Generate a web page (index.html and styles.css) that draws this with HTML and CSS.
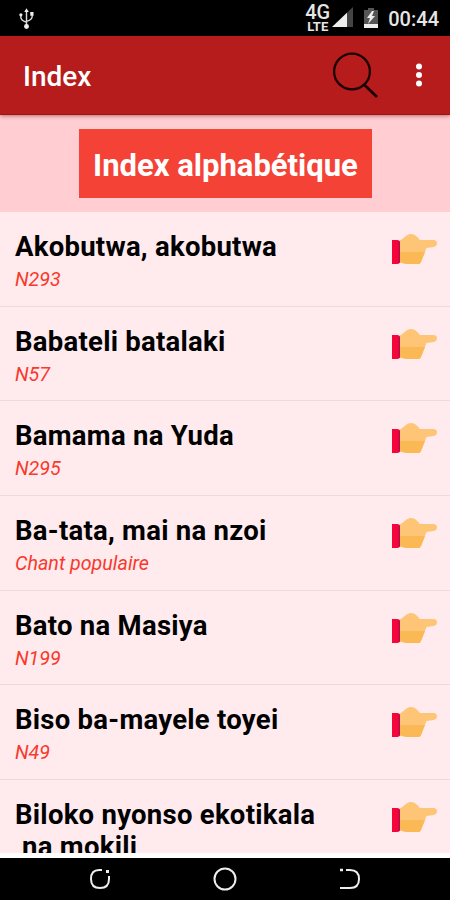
FILE: index.html
```html
<!DOCTYPE html>
<html lang="fr">
<head>
<meta charset="utf-8">
<title>Index</title>
<link rel="stylesheet" href="styles.css">
</head>
<body>
<svg class="defs" aria-hidden="true">
  <symbol id="hand" viewBox="0 0 46 32">
    <path fill="#ffc576" d="M8 8C12 6.500 15 1 20 1c4 0 6.500 3 9 6h13.500q3.500 .3 3.500 3.300t-3.500 3.700l-7 1L29.800 29.500q-.8 1.500-3 1.500H16q-4-.5-8-2z"/>
    <path fill="#fbb955" d="M8 19h26L29.800 29.500q-.8 1.500-3 1.500H16q-4-.5-8-2z"/>
    <path fill="#f4053a" d="M1 7h5q3 0 3 3v18q0 3-3 3H1z"/>
    <path fill="#b80c4c" d="M7.500 7.500q1.500 .7 1.500 2.500v18q0 2-1.500 2.500z"/>
  </symbol>
</svg>
<div class="phone">
  <div class="status">
    <svg class="usb" viewBox="0 0 16 23" fill="none" stroke="#ddd" stroke-width="1.500"><path d="M8 3v16M2 7v3q0 3 6 5M14 6v3q0 3-6 5"/><g fill="#eee" stroke="none"><path d="M8 0l2.500 4h-5z"/><circle cx="2" cy="7" r="1.700"/><path d="M12 4h3.500v4H12z"/><circle cx="8" cy="19.500" r="2.600"/></g></svg>
    <div class="network"><span class="gen">4G</span><span class="lte">LTE</span></div>
    <svg class="signal" viewBox="0 0 21 20"><path fill="#444" d="M21 0v20H0z"/><path fill="#eee" d="M15 5.700V20H0z"/></svg>
    <svg class="battery" viewBox="0 0 14 20"><path fill="#555" d="M4 0h6v2h4v14H0V2h4z"/><path fill="#eee" d="M0 16h14v4H0zM8 3L3 10h3l-2 6 7-8H8l2-5z"/></svg>
    <span class="clock">00:44</span>
  </div>
  <header class="bar">
    <h1>Index</h1>
    <svg class="search" viewBox="0 0 48 48" fill="none" stroke="#1c0000" stroke-width="2.300"><circle cx="20" cy="20.500" r="17.900"/><path d="M32 33.500l13 12.500" stroke-width="2.800"/></svg>
    <svg class="more" viewBox="0 0 6 24" fill="#fff"><circle cx="3" cy="3.500" r="3"/><circle cx="3" cy="12" r="3"/><circle cx="3" cy="20.500" r="3"/></svg>
  </header>
  <section class="heading"><div class="pill">Index alphabétique</div></section>
  <main class="list">
    <div class="row"><div class="txt"><b>Akobutwa, akobutwa</b><i>N293</i></div><svg class="hand"><use href="#hand"/></svg></div>
    <div class="row"><div class="txt"><b>Babateli batalaki</b><i>N57</i></div><svg class="hand"><use href="#hand"/></svg></div>
    <div class="row"><div class="txt"><b>Bamama na Yuda</b><i>N295</i></div><svg class="hand"><use href="#hand"/></svg></div>
    <div class="row"><div class="txt"><b>Ba-tata, mai na nzoi</b><i>Chant populaire</i></div><svg class="hand"><use href="#hand"/></svg></div>
    <div class="row"><div class="txt"><b>Bato na Masiya</b><i>N199</i></div><svg class="hand"><use href="#hand"/></svg></div>
    <div class="row"><div class="txt"><b>Biso ba-mayele toyei</b><i>N49</i></div><svg class="hand"><use href="#hand"/></svg></div>
    <div class="row"><div class="txt"><b>Biloko nyonso ekotikala<br>&nbsp;na mokili</b></div><svg class="hand"><use href="#hand"/></svg></div>
  </main>
  <nav class="nav">
    <svg viewBox="0 0 24 24" fill="none" stroke="#eee" stroke-width="2"><path d="M14 3h-3q-8 0-8 9t9 9 9-9V9"/><path d="M18 4.500h3" stroke-width="3"/></svg>
    <svg viewBox="0 0 24 24" fill="none" stroke="#eee" stroke-width="2"><circle cx="12" cy="12" r="10.500"/></svg>
    <svg viewBox="0 0 24 24" fill="none" stroke="#eee" stroke-width="2"><path d="M8 3h4q9 0 9 9t-9 9H2"/><path d="M2 3h3" stroke-width="2.500"/></svg>
  </nav>
</div>
</body>
</html>
```
FILE: styles.css
```css
* { box-sizing: border-box; }
body { margin: 0; font-family: Roboto, sans-serif; background: #fff; }
svg { display: block; flex: none; }
.defs { display: none; }
.phone { width: 450px; height: 900px; display: flex; flex-direction: column; overflow: hidden; }
.status { flex: none; height: 36px; background: #000; color: #e6e6e6; display: flex; align-items: flex-start; padding: 7px 11px 0 19px; }
.usb { width: 15px; height: 22px; margin-top: 1px; }
.network { margin-left: auto; width: 27px; display: flex; flex-direction: column; align-items: center; margin-top: -3px; }
.gen { font-size: 20px; line-height: 17px; font-weight: 500; }
.lte { font-size: 13px; line-height: 11px; font-weight: 700; }
.signal { width: 21px; height: 20px; margin-left: 1px; }
.battery { width: 14px; height: 20px; margin: 1px 10px 0 11px; }
.clock { font-size: 20px; line-height: 24px; font-weight: 500; }
.bar { flex: none; height: 79px; background: #b71c1c; color: #fff; display: flex; align-items: center; padding: 0 28px 0 23px; border-bottom: 1px solid #a90f0f; position: relative; box-shadow: 0 1px 4px rgba(80, 0, 0, .45); }
h1 { margin: 3px auto 0 0; font-size: 28px; font-weight: 500; }
.search { width: 48px; height: 48px; margin-right: 1px; }
.more { width: 6px; height: 24px; margin-left: 35px; }
.heading { flex: none; height: 97px; background: #ffcdd2; padding: 14px 0 0 79px; }
.pill { width: 293px; height: 69px; background: #f44336; color: #fff; font-size: 31px; font-weight: 700; line-height: 73px; text-align: center; white-space: nowrap; }
.list { height: 641px; flex: none; background: #ffebee; overflow: hidden; }
.row { height: 94.670px; border-bottom: 1px solid #ecd9dc; padding: 19px 13px 0 15px; display: flex; justify-content: space-between; align-items: flex-start; }
.row b { display: block; font-size: 27.500px; line-height: 32px; font-weight: 700; letter-spacing: .26px; white-space: nowrap; }
.row i { display: block; font-size: 19.700px; line-height: 24px; margin-top: 5px; color: #f8392c; }
.hand { width: 46px; height: 32px; margin-top: 2px; }
.nav { margin-top: auto; height: 42px; background: #000; display: flex; justify-content: space-between; padding: 9px 88px 0 88px; }
.nav svg { width: 24px; height: 24px; }
```
